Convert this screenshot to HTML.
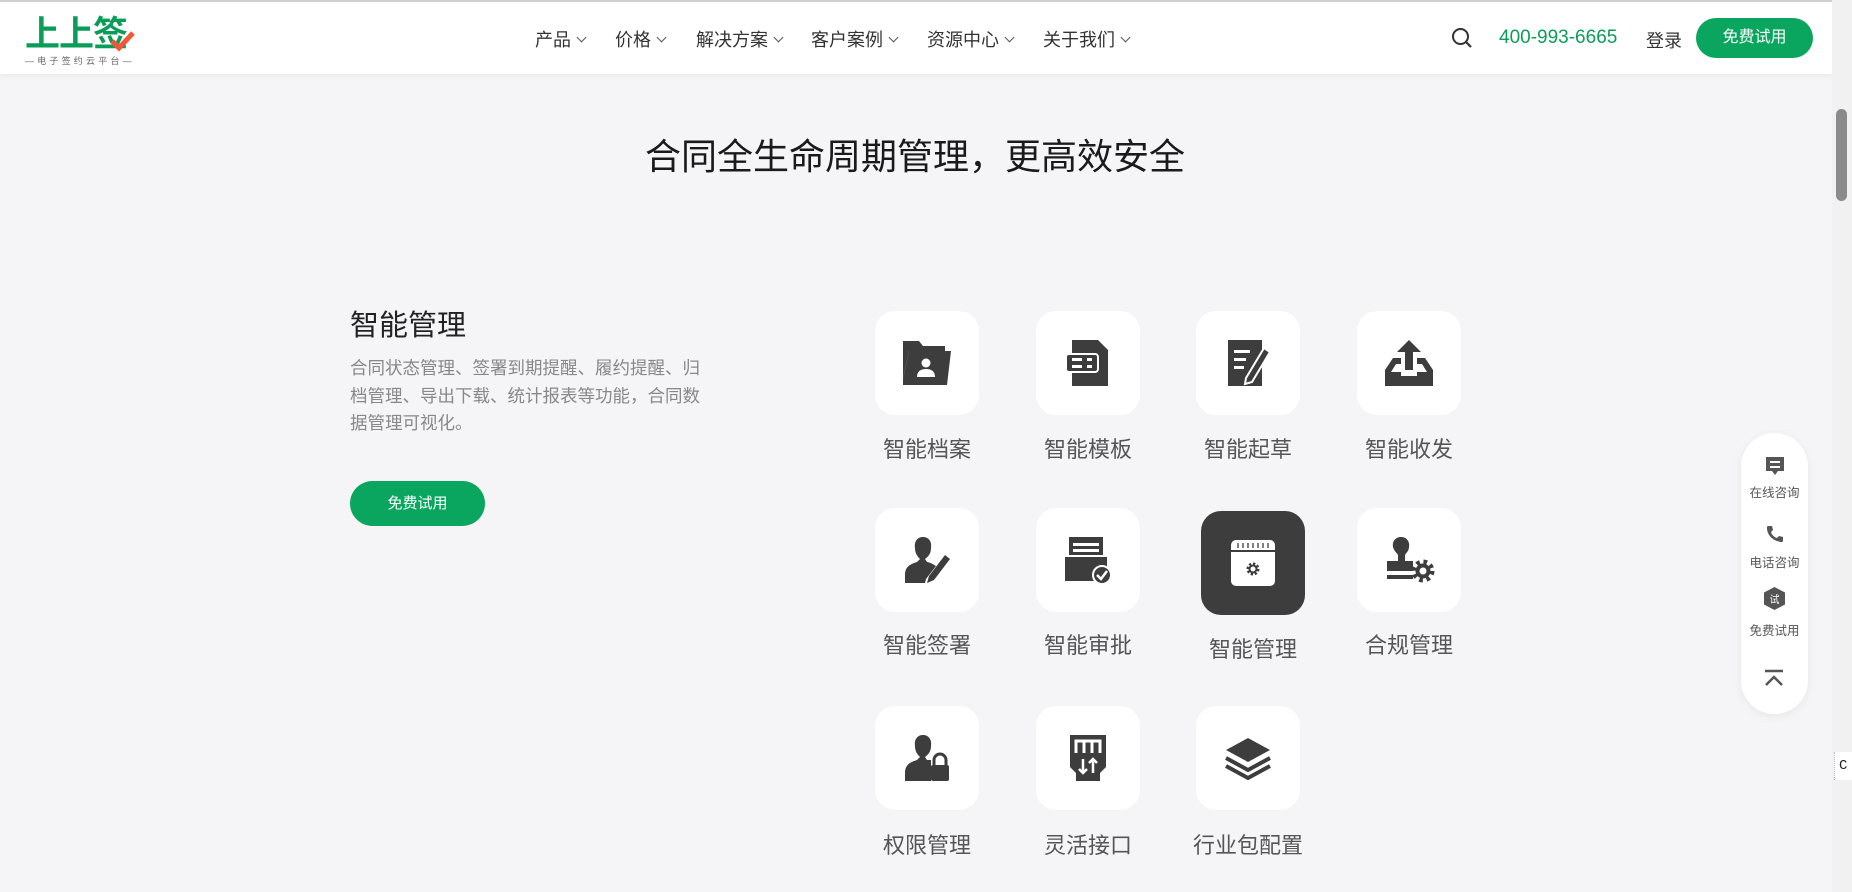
<!DOCTYPE html>
<html><head><meta charset="utf-8">
<style>
*{margin:0;padding:0;box-sizing:border-box}
body{width:1852px;height:892px;overflow:hidden;background:#f5f5f7;font-family:"Liberation Sans","Noto Sans CJK SC",sans-serif;position:relative}
.hdr{position:absolute;left:0;top:0;width:1832px;height:74px;background:#fff;border-top:2px solid #d0d0d0;box-shadow:0 2px 6px rgba(0,0,0,.05)}
.logo{position:absolute;left:25px;top:12px;font-size:35px;font-weight:bold;color:#0a9d58;letter-spacing:-1px;line-height:42px}
.logo .ck{position:absolute;left:84px;top:16px}
.sub{position:absolute;left:25px;top:52px;font-size:9px;color:#666;letter-spacing:3.2px;white-space:nowrap}
.nav{position:absolute;top:24px;font-size:18px;color:#333;white-space:nowrap}
.nav span:after{content:"";display:inline-block;width:6px;height:6px;border-right:1.3px solid #555;border-bottom:1.3px solid #555;transform:rotate(45deg);margin:0 0 5px 7px}
.phone{position:absolute;left:1499px;top:25px;font-size:19px;color:#0a9d58}
.login{position:absolute;left:1646px;top:25px;font-size:18px;color:#333}
.btn{position:absolute;background:#0aa65f;color:#fff;border-radius:24px;text-align:center}
.sb{position:absolute;left:1832px;top:0;width:20px;height:892px;background:#f1f1f1}
.sb i{position:absolute;left:4px;top:109px;width:11px;height:92px;background:#8a8a8a;border-radius:6px}
h1{position:absolute;left:0;width:1830px;top:128px;text-align:center;font-size:36px;font-weight:normal;color:#1a1a1a}
.t2{position:absolute;left:350px;top:302px;font-size:29px;color:#222}
.desc{position:absolute;left:350px;top:355px;width:356px;font-size:17.5px;line-height:27.5px;color:#888}
.box{position:absolute;width:104px;height:104px;background:#fff;border-radius:20px;display:flex;align-items:center;justify-content:center}
.box.on{background:#3d3d3d}
.lbl{position:absolute;width:160px;text-align:center;font-size:22px;color:#555}
.float{position:absolute;left:1741px;top:433px;width:67px;height:281px;background:#fff;border-radius:34px;box-shadow:0 2px 10px rgba(0,0,0,.06)}
.fi{position:absolute;left:0;width:67px;text-align:center;font-size:12.5px;color:#555}
</style></head><body>
<div class="hdr">
 <div class="logo">上上签<svg class="ck" width="26" height="22" viewBox="0 0 26 22"><path d="M3 11 L10 18 L24 3" stroke="#f0563a" stroke-width="5" fill="none"/></svg></div>
 <div class="sub">—电子签约云平台—</div>
 <div class="nav" style="left:535px"><span>产品</span></div>
 <div class="nav" style="left:615px"><span>价格</span></div>
 <div class="nav" style="left:696px"><span>解决方案</span></div>
 <div class="nav" style="left:811px"><span>客户案例</span></div>
 <div class="nav" style="left:927px"><span>资源中心</span></div>
 <div class="nav" style="left:1043px"><span>关于我们</span></div>
 <svg style="position:absolute;left:1451px;top:25px" width="22" height="22" viewBox="0 0 22 22"><circle cx="9.5" cy="9.5" r="7.5" fill="none" stroke="#333" stroke-width="2"/><path d="M15 15 L20 20" stroke="#333" stroke-width="2.2"/></svg>
 <div class="phone">400-993-6665</div>
 <div class="login">登录</div>
 <div class="btn" style="left:1696px;top:16px;width:117px;height:40px;line-height:40px;font-size:16px">免费试用</div>
</div>
<div class="sb"><i></i></div>
<h1>合同全生命周期管理，更高效安全</h1>
<div class="t2">智能管理</div>
<div class="desc">合同状态管理、签署到期提醒、履约提醒、归档管理、导出下载、统计报表等功能，合同数据管理可视化。</div>
<div class="btn" style="left:350px;top:481px;width:135px;height:45px;line-height:45px;font-size:15px">免费试用</div>

<div class="box" style="left:875px;top:311px"><svg width="52" height="48" viewBox="0 0 52 48"><path d="M2 2h16l4 5h22v5H8L2 40z" fill="#3d3d3d"/><path d="M2 40 L8 12 H50 L46 46 H2z" fill="#3d3d3d"/><circle cx="25" cy="24" r="4.5" fill="#fff"/><path d="M16 38c0-6 4-8 9-8s9 2 9 8z" fill="#fff"/></svg></div>
<div class="box" style="left:1036px;top:311px"><svg width="48" height="50" viewBox="0 0 48 50"><path d="M8 2h26l10 10v36H8z" fill="#3d3d3d"/><rect x="2" y="16" width="32" height="18" rx="3" fill="#3d3d3d" stroke="#fff" stroke-width="2"/><rect x="8" y="20" width="10" height="3" fill="#fff"/><rect x="8" y="27" width="10" height="3" fill="#fff"/><rect x="23" y="20" width="5" height="3" fill="#fff"/><rect x="23" y="27" width="5" height="3" fill="#fff"/></svg></div>
<div class="box" style="left:1196px;top:311px"><svg width="48" height="50" viewBox="0 0 48 50"><rect x="4" y="2" width="34" height="46" fill="#3d3d3d"/><rect x="10" y="12" width="16" height="3" fill="#fff"/><rect x="10" y="20" width="12" height="3" fill="#fff"/><rect x="10" y="28" width="10" height="3" fill="#fff"/><path d="M22 40 L40 10 L46 14 L28 44 L21 46z" fill="#3d3d3d" stroke="#fff" stroke-width="2"/></svg></div>
<div class="box" style="left:1357px;top:311px"><svg width="52" height="50" viewBox="0 0 52 50"><path d="M26 2 L38 14 H30 V32 H22 V14 H14z" fill="#3d3d3d"/><path d="M2 48 V32 L10 20 H18 V26 H13 L8 34 H18 V38 H34 V34 H44 L39 26 H34 V20 H42 L50 32 V48z" fill="#3d3d3d"/></svg></div>
<div class="lbl" style="left:847px;top:432px">智能档案</div>
<div class="lbl" style="left:1008px;top:432px">智能模板</div>
<div class="lbl" style="left:1168px;top:432px">智能起草</div>
<div class="lbl" style="left:1329px;top:432px">智能收发</div>

<div class="box" style="left:875px;top:508px"><svg width="48" height="50" viewBox="0 0 48 50"><path d="M20 2 C14 2 11 7 12 13 C12 18 14 21 17 24 L14 27 C8 29 2 31 2 40 V48 H22 L23 44 L33 31 C30 29 26 27 24 27 L22 24 C26 21 28 18 28 13 C29 7 26 2 20 2z" fill="#3d3d3d"/><path d="M24 48 L26 41 L42 20 L47 24 L31 45z" fill="#3d3d3d"/></svg></div>
<div class="box" style="left:1036px;top:508px"><svg width="50" height="50" viewBox="0 0 50 50"><rect x="6" y="2" width="34" height="20" fill="#3d3d3d"/><rect x="10" y="8" width="26" height="3" fill="#fff"/><rect x="10" y="14" width="26" height="3" fill="#fff"/><rect x="2" y="20" width="42" height="26" fill="#3d3d3d"/><rect x="2" y="20" width="42" height="2" fill="#fff"/><circle cx="39" cy="40" r="9" fill="#3d3d3d" stroke="#fff" stroke-width="2"/><path d="M34 40 L38 44 L44 36" stroke="#fff" stroke-width="2.5" fill="none"/></svg></div>
<div class="box on" style="left:1201px;top:511px"><svg width="48" height="50" viewBox="0 0 48 50"><rect x="2" y="2" width="44" height="46" rx="5" fill="#fff"/><rect x="2" y="12" width="44" height="2" fill="#3d3d3d"/><path d="M9 5v5M14 5v5M19 5v5M24 5v5M29 5v5M34 5v5M39 5v5" stroke="#3d3d3d" stroke-width="1.3"/><circle cx="24" cy="31" r="5" fill="none" stroke="#3d3d3d" stroke-width="3" stroke-dasharray="2.2 1.7"/><circle cx="24" cy="31" r="3.5" fill="none" stroke="#3d3d3d" stroke-width="2"/></svg></div>
<div class="box" style="left:1357px;top:508px"><svg width="52" height="50" viewBox="0 0 52 50"><path d="M18 2 C12 2 9 7 10 12 C11 16 14 18 15 20 V26 H4 V36 H30 V26 H22 V20 C23 18 26 16 26 12 C27 7 24 2 18 2z" fill="#3d3d3d"/><rect x="4" y="40" width="26" height="4" fill="#3d3d3d"/><circle cx="40" cy="36" r="9" fill="none" stroke="#3d3d3d" stroke-width="5" stroke-dasharray="3.5 3.6"/><circle cx="40" cy="36" r="5.5" fill="none" stroke="#3d3d3d" stroke-width="4"/></svg></div>
<div class="lbl" style="left:847px;top:628px">智能签署</div>
<div class="lbl" style="left:1008px;top:628px">智能审批</div>
<div class="lbl" style="left:1173px;top:632px">智能管理</div>
<div class="lbl" style="left:1329px;top:628px">合规管理</div>

<div class="box" style="left:875px;top:706px"><svg width="48" height="50" viewBox="0 0 48 50"><path d="M20 2 C14 2 11 7 12 13 C12 18 14 21 17 24 L14 27 C8 29 2 31 2 40 V48 H28 V27 C26 27 25 27 24 27 L22 24 C26 21 28 18 28 13 C29 7 26 2 20 2z" fill="#3d3d3d"/><rect x="28" y="32" width="18" height="16" rx="2" fill="#3d3d3d"/><path d="M31 32 V27 a6 6 0 0 1 12 0 V32" stroke="#3d3d3d" stroke-width="3" fill="none"/></svg></div>
<div class="box" style="left:1036px;top:706px"><svg width="48" height="50" viewBox="0 0 48 50"><path d="M6 2 H42 V34 L36 40 V48 H12 V40 L6 34z" fill="#3d3d3d"/><path d="M12 20 V8 H36 V20 M20 8 V20 M28 8 V20" stroke="#fff" stroke-width="3" fill="none"/><path d="M19 26 V40 M15 36 L19 40 L23 36 M29 40 V26 M25 30 L29 26 L33 30" stroke="#fff" stroke-width="2.5" fill="none"/></svg></div>
<div class="box" style="left:1196px;top:706px"><svg width="48" height="48" viewBox="0 0 48 48"><path d="M24 4 L46 16 L24 28 L2 16z" fill="#3d3d3d"/><path d="M2 24 L24 36 L46 24" stroke="#3d3d3d" stroke-width="4" fill="none"/><path d="M2 32 L24 44 L46 32" stroke="#3d3d3d" stroke-width="4" fill="none"/></svg></div>
<div class="lbl" style="left:847px;top:828px">权限管理</div>
<div class="lbl" style="left:1008px;top:828px">灵活接口</div>
<div class="lbl" style="left:1168px;top:828px">行业包配置</div>

<div class="float">
 <svg style="position:absolute;left:23px;top:22px" width="22" height="22" viewBox="0 0 22 22"><path d="M2 2h18v14h-6l-3 4-3-4H2z" fill="#555"/><rect x="6" y="6" width="10" height="2" fill="#fff"/><rect x="6" y="11" width="10" height="2" fill="#fff"/></svg>
 <div class="fi" style="top:49px">在线咨询</div>
 <svg style="position:absolute;left:24px;top:91px" width="20" height="20" viewBox="0 0 20 20"><path d="M3 2 L7 2 L8 6 L6 8 C7 11 9 13 12 14 L14 12 L18 13 L18 17 C18 18 17 18 16 18 C8 17 2 11 2 4 C2 3 2 2 3 2z" fill="#555"/></svg>
 <div class="fi" style="top:119px">电话咨询</div>
 <svg style="position:absolute;left:22px;top:153px" width="23" height="25" viewBox="0 0 23 25"><path d="M11.5 1 L22 6.5 V18.5 L11.5 24 L1 18.5 V6.5z" fill="#555"/><text x="11.5" y="17" font-size="10" fill="#fff" text-anchor="middle" font-family="Noto Sans CJK SC">试</text></svg>
 <div class="fi" style="top:187px">免费试用</div>
 <svg style="position:absolute;left:22px;top:236px" width="22" height="18" viewBox="0 0 22 18"><path d="M2 2h18" stroke="#555" stroke-width="2.5"/><path d="M3 16 L11 8 L19 16" stroke="#555" stroke-width="2.5" fill="none"/></svg>
</div>
<div style="position:absolute;left:1834px;top:752px;width:18px;height:28px;background:#fff;border-left:1px dotted #bbb;font-size:14px;line-height:28px;padding-left:4px;font-family:'Liberation Mono',monospace;color:#222">C</div>
</body></html>
